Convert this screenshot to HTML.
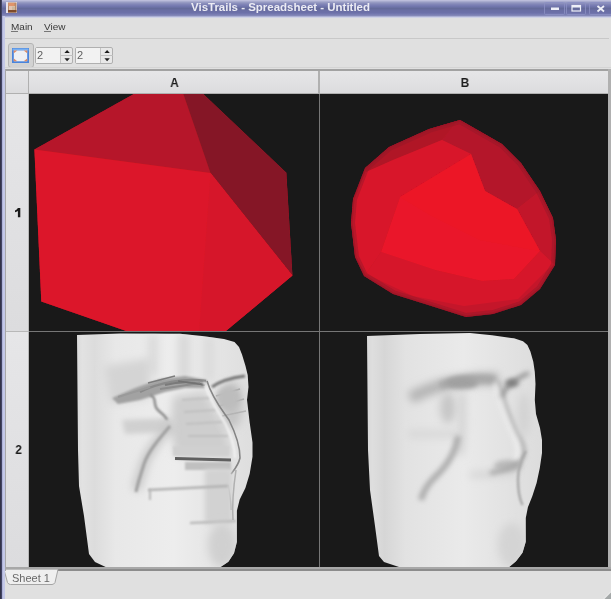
<!DOCTYPE html>
<html><head><meta charset="utf-8">
<style>
html,body{margin:0;padding:0;width:611px;height:599px;overflow:hidden;background:#e0e0e0;font-family:"Liberation Sans",sans-serif;}
.a{position:absolute;}
.tx{will-change:transform;}
#title{left:0;top:0;width:611px;height:19px;background:linear-gradient(#c4c4e0 0px,#b4b6d6 1px,#9ca0c6 2px,#8488b8 4px,#7478b0 6px,#646a9a 8.5px,#6a6ea4 10.5px,#6c70a8 12.5px,#7478b0 14px,#8488b8 15.5px,#c8cce8 17.2px,#e0e0e0 18.2px);}
#ttext{left:191px;top:1px;font-size:10.5px;font-weight:bold;color:#ececf4;white-space:nowrap;line-height:13px;transform:scaleX(1.093);transform-origin:0 0;}
#menu{left:4px;top:19px;width:607px;height:19px;background:#e0e0e0;}
.mi{font-size:9px;color:#3a3a3a;top:22px;line-height:11px;transform:scaleX(1.11);transform-origin:0 0;}
.mi u{text-decoration:none;border-bottom:1px solid #555;}
#sep1{left:4px;top:38px;width:605px;height:1px;background:#c8c8c8;}
#tbtn{left:8px;top:43px;width:24px;height:23px;border:1px solid #b4b4b4;border-radius:3px;background:#d2d2d2;}
.spin{top:47px;height:15px;border:1px solid #b0b0b0;border-radius:2px;background:#e8e8e8;}
.spin .f{position:absolute;left:0;top:0;width:24px;height:15px;background:#f2f2f2;border-right:1px solid #c4c4c4;}
.spin .t{position:absolute;left:1px;top:1px;font-size:11px;color:#606060;line-height:13px;}
.spin .up{position:absolute;left:27.5px;top:2.3px;width:0;height:0;border-left:2.6px solid transparent;border-right:2.6px solid transparent;border-bottom:2.6px solid #222;}
.spin .dn{position:absolute;left:27.5px;top:9.8px;width:0;height:0;border-left:2.6px solid transparent;border-right:2.6px solid transparent;border-top:2.6px solid #222;}
.spin .mid{position:absolute;left:25px;top:7px;width:12px;height:1px;background:#c0c0c0;}
#grid{left:5px;top:69px;width:605px;height:501px;background:#767676;}
.hdr{background:linear-gradient(#e6e6e8,#dcdcde);}
.hl{transform:scaleX(0.9);font-size:13px;font-weight:bold;color:#1a1a1a;line-height:16px;text-align:center;}
.cell{background:#191919;overflow:hidden;}
#tab{left:4px;top:569px;width:54px;height:16px;}
#tabtext{left:12px;top:571.5px;font-size:11px;color:#686868;line-height:13px;}
#root{position:absolute;left:0;top:0;width:611px;height:599px;overflow:hidden;background:#e0e0e0;filter:blur(0.6px);}
</style></head><body><div id="root">
<div class="a" id="title"></div>
<svg class="a" style="left:6px;top:2px" width="11" height="11" viewBox="0 0 11 11">
<rect width="11" height="11" fill="#e6e2ea"/>
<rect x="2" y="0.5" width="8.5" height="10" fill="#b88a68"/>
<rect x="2.5" y="1" width="6" height="3" fill="#e0946a"/>
<rect x="3" y="4" width="6" height="4" fill="#e2c4b0"/>
<rect x="6" y="4.5" width="3" height="3.5" fill="#cdb89c"/>
<rect x="2" y="8" width="8.5" height="2.5" fill="#7e4a2a"/>
</svg>
<svg class="a" style="left:543px;top:1px" width="68" height="15" viewBox="543 1 68 15">
<g fill="none" stroke="#8c90c4" stroke-width="1" opacity="0.8">
<rect x="544.5" y="2.5" width="20" height="12" rx="1"/>
<rect x="566.5" y="2.5" width="19" height="12" rx="1"/>
<rect x="589.5" y="2.5" width="23" height="12" rx="1"/>
</g>
<rect x="551" y="7.5" width="8" height="2.5" fill="#eef0f8"/>
<rect x="572" y="5.5" width="8.5" height="5.5" fill="none" stroke="#eef0f8" stroke-width="1.2"/>
<rect x="572" y="5.5" width="8.5" height="2" fill="#eef0f8"/>
<path d="M597.5 6 L604 11.5 M604 6 L597.5 11.5" stroke="#eef0f8" stroke-width="1.8"/>
</svg>
<div class="a tx" id="ttext">VisTrails - Spreadsheet - Untitled</div>
<div class="a" id="menu"></div>
<div class="a mi tx" style="left:11px">Main</div><div class="a" style="left:11px;top:31px;width:7px;height:1px;background:#777"></div>
<div class="a mi tx" style="left:43.5px">View</div><div class="a" style="left:44px;top:31px;width:7px;height:1px;background:#777"></div>
<div class="a" id="sep1"></div>

<!-- toolbar -->
<div class="a" id="tbtn"></div>
<svg class="a" style="left:12px;top:48px" width="17" height="15" viewBox="0 0 17 15">
<rect x="0" y="0" width="17" height="15" fill="#4a84dc"/>
<rect x="0.5" y="0.5" width="16" height="2" fill="#7ab0f0"/>
<rect x="1.8" y="2.5" width="13.4" height="10.8" fill="#eef0f4"/>
<path d="M1.8 2.5h3.5l-3.5 2.8z M15.2 2.5h-3.5l3.5 2.8z M1.8 13.3h3.5l-3.5-2.8z M15.2 13.3h-3.5l3.5-2.8z" fill="#e08a60"/>
</svg>
<div class="a spin" style="left:34.5px;width:36px">
 <div class="f"></div><div class="t tx">2</div><div class="mid"></div><svg style="position:absolute;left:25px;top:0" width="12" height="15" viewBox="0 0 12 15"><path d="M3.4 5 L6.1 2 L8.8 5 Z M3.4 10.2 L6.1 13.2 L8.8 10.2 Z" fill="#1e1e1e"/></svg>
</div>
<div class="a spin" style="left:74.5px;width:36px">
 <div class="f"></div><div class="t tx">2</div><div class="mid"></div><svg style="position:absolute;left:25px;top:0" width="12" height="15" viewBox="0 0 12 15"><path d="M3.4 5 L6.1 2 L8.8 5 Z M3.4 10.2 L6.1 13.2 L8.8 10.2 Z" fill="#1e1e1e"/></svg>
</div>

<!-- grid -->
<div class="a" style="left:4px;top:67px;width:607px;height:1px;background:#d4d4d4"></div>
<div class="a" id="grid"></div>
<div class="a" style="left:5px;top:69px;width:605px;height:25px;background:#b0b0b0"></div><div class="a" style="left:5px;top:69px;width:605px;height:2px;background:#a2a2a2"></div>
<div class="a hdr" style="left:6px;top:71px;width:22px;height:22px"></div>
<div class="a hdr" style="left:29px;top:71px;width:289px;height:22px"></div>
<div class="a hdr" style="left:320px;top:71px;width:288px;height:22px"></div>
<div class="a hl tx" style="left:30px;top:74.5px;width:289px">A</div>
<div class="a hl tx" style="left:320.5px;top:74.5px;width:288px">B</div>
<div class="a" style="left:5px;top:94px;width:24px;height:476px;background:#b8b8b8"></div>
<div class="a hdr" style="left:6px;top:94px;width:22px;height:237px"></div>
<div class="a hdr" style="left:6px;top:332px;width:22px;height:235px"></div>
<svg class="a" style="left:13px;top:206px" width="10" height="13" viewBox="13 206 10 13"><path d="M17.9 208 L20.3 208 L20.3 217.2 L17.9 217.2 L17.9 211 Q16.5 212 15 212.3 L15 210.4 Q17 209.8 17.9 208 Z" fill="#1a1a1a"/></svg>
<div class="a hl tx" style="left:7.5px;top:441.5px;width:21px">2</div>

<div class="a cell" id="c1" style="left:29px;top:94px;width:290px;height:237px"><svg width="290" height="237" viewBox="29 94 290 237" style="display:block">
<defs><filter id="pb" filterUnits="userSpaceOnUse" x="0" y="80" width="330" height="270"><feGaussianBlur stdDeviation="0.5"/></filter></defs>
<g filter="url(#pb)">
<polygon points="34.4,149.5 141,90 199,90 286.3,172.8 292.4,275.6 215,340 152,340 41.3,301.4" fill="#c01428"/>
<polygon points="34.4,149.5 141,90 182,90 210.5,173" fill="#b6142a"/>
<polygon points="182,90 199,90 286.3,172.8 292.4,275.6 210.5,173" fill="#851525"/>
<polygon points="34.4,149.5 210.5,173 292.4,275.6 215,340 152,340 41.3,301.4" fill="#dc1429"/>
<polygon points="210.5,173 292.4,275.6 215,340 198.5,340" fill="#d6142a"/>
</g>
</svg></div>
<div class="a cell" id="c2" style="left:320px;top:94px;width:288px;height:237px"><svg width="288" height="237" viewBox="320 94 288 237" style="display:block">
<defs><filter id="sb" filterUnits="userSpaceOnUse" x="300" y="80" width="300" height="260"><feGaussianBlur stdDeviation="0.7"/></filter>
<clipPath id="sc"><polygon points="460,120 502,144 521,163 540,191 553,218 556,240 555,265 540,289 521,305 493,314 466,317 425,304 393,294 364,276 355,257 351,223 353,199 365,168 389,147 429,129"/></clipPath></defs>
<g filter="url(#sb)">
<polygon points="460,120 502,144 521,163 540,191 553,218 556,240 555,265 540,289 521,305 493,314 466,317 425,304 393,294 364,276 355,257 351,223 353,199 365,168 389,147 429,129" fill="#c4142a"/>
<g clip-path="url(#sc)">
<polygon points="471,154 485,191 517,209 540,191 521,163 502,144 460,118 442,140" fill="#b4142a"/>
<polygon points="365,168 389,147 429,129 460,118 442,140 393,160 366,172" fill="#b01428"/>
<polygon points="366,172 393,160 442,140 471,154 400,197 381,252 366,274 355,257 351,223 353,199" fill="#d8142a"/>
<polygon points="517,209 540,191 553,218 556,240 555,265 540,251" fill="#c2142a"/>
<polygon points="381,252 435,270 482,281 514,279 540,251 555,265 547,270 518,299 464,306 413,296 366,274" fill="#d6142a"/>
<polygon points="381,252 435,270 482,281 514,279 540,251 555,265 540,289 521,305 493,314 466,317 425,304 393,294 364,276" fill="#d0142a" opacity="0.0"/>
<polygon points="471,154 400,197 381,252 435,270 482,281 514,279 540,251 517,209 485,191" fill="#ea1529"/>
<polygon points="400,197 471,154 485,191 517,209 540,251 480,240 430,215" fill="#ee1628" opacity="0.5"/>
<polygon points="460,120 502,144 521,163 540,191 553,218 556,240 555,265 540,289 521,305 493,314 466,317 425,304 393,294 364,276 355,257 351,223 353,199 365,168 389,147 429,129" fill="none" stroke="#941428" stroke-width="8" opacity="0.45"/>
<polygon points="460,120 502,144 521,163 540,191 553,218 556,240 555,265 540,289 521,305 493,314 466,317 425,304 393,294 364,276 355,257 351,223 353,199 365,168 389,147 429,129" fill="none" stroke="#941428" stroke-width="3" opacity="0.5"/>
</g>
</g>
</svg></div>
<div class="a cell" id="c3" style="left:29px;top:332px;width:290px;height:235px"><svg width="290" height="235" viewBox="29 332 290 235" style="display:block">
<defs>
<filter id="b05" filterUnits="userSpaceOnUse" x="0" y="300" width="620" height="300"><feGaussianBlur stdDeviation="0.6"/></filter>
<filter id="b1" filterUnits="userSpaceOnUse" x="0" y="300" width="620" height="300"><feGaussianBlur stdDeviation="1.2"/></filter>
<filter id="b2" filterUnits="userSpaceOnUse" x="0" y="300" width="620" height="300"><feGaussianBlur stdDeviation="2.5"/></filter>
<filter id="b4" filterUnits="userSpaceOnUse" x="0" y="300" width="620" height="300"><feGaussianBlur stdDeviation="4"/></filter>
<filter id="b6" filterUnits="userSpaceOnUse" x="0" y="300" width="620" height="300"><feGaussianBlur stdDeviation="6"/></filter>
<linearGradient id="fg1" gradientUnits="userSpaceOnUse" x1="77" x2="252" y1="0" y2="0">
<stop offset="0" stop-color="#dadada"/><stop offset="0.03" stop-color="#e2e2e2"/><stop offset="0.1" stop-color="#dcdcdc"/><stop offset="0.22" stop-color="#e8e8e8"/><stop offset="0.55" stop-color="#ededed"/><stop offset="1" stop-color="#dedede"/>
</linearGradient>
<clipPath id="cp1"><polygon points="77,335 120,333.5 180,333.8 202,336 224,339 234.5,342 239,347 242,354.5 245.5,366 247.7,375 248.5,387 247,400 249.7,422.7 252.5,442.6 252.5,456.8 249.7,473.8 245.4,488 239.7,499.4 236.9,510.7 236.9,527.7 236.9,541.9 234,553.3 228.4,561.8 219.9,567.5 215,570 112,570 95,562 89,554 84,516 79,486 78,450"/></clipPath>
</defs><polygon points="77,335 120,333.5 180,333.8 202,336 224,339 234.5,342 239,347 242,354.5 245.5,366 247.7,375 248.5,387 247,400 249.7,422.7 252.5,442.6 252.5,456.8 249.7,473.8 245.4,488 239.7,499.4 236.9,510.7 236.9,527.7 236.9,541.9 234,553.3 228.4,561.8 219.9,567.5 215,570 112,570 95,562 89,554 84,516 79,486 78,450" fill="url(#fg1)"/>
<g clip-path="url(#cp1)">
<rect x="148" y="334" width="10" height="42" fill="#dadada" filter="url(#b4)"/>
<rect x="178" y="334" width="12" height="45" fill="#d8d8d8" filter="url(#b4)"/>
<rect x="204" y="336" width="10" height="45" fill="#dadada" filter="url(#b4)"/>
<polygon points="104,366 150,358 150,398 110,404" fill="#d4d4d4" filter="url(#b4)"/>
<polygon points="173,396 205,392 224,428 232,456 176,456 170,430" fill="#cecece" filter="url(#b4)"/>
<polygon points="122,420 172,418 176,432 125,434" fill="#d0d0d0" filter="url(#b2)"/>
<ellipse cx="232" cy="405" rx="11" ry="24" fill="#c4c4c4" filter="url(#b4)"/>
<polygon points="112,398 135,388 160,379 185,376 207,380 205,388 185,388 165,392 140,400 118,404" fill="#a2a2a2" filter="url(#b1)"/>
<path d="M140 392 C160 382 185 378 206 381" stroke="#8a8a8a" stroke-width="2.5" fill="none" filter="url(#b05)"/>
<path d="M165 385 C180 381 195 382 205 385" stroke="#7a7a7a" stroke-width="2" fill="none" filter="url(#b05)"/>
<path d="M148 383 L175 376" stroke="#7c7c7c" stroke-width="1.5" fill="none" filter="url(#b05)"/>
<path d="M160 389 L200 383" stroke="#8c8c8c" stroke-width="2" fill="none" filter="url(#b05)"/>
<path d="M118 397 L150 387" stroke="#9a9a9a" stroke-width="2" fill="none" filter="url(#b05)"/>
<path d="M178 381 L205 385" stroke="#727272" stroke-width="1.5" fill="none" filter="url(#b05)"/>
<path d="M216 396 L240 389" stroke="#a4a4a4" stroke-width="1.5" fill="none" filter="url(#b05)"/>
<path d="M219 406 L244 399" stroke="#acacac" stroke-width="1.5" fill="none" filter="url(#b05)"/>
<path d="M222 416 L246 411" stroke="#b4b4b4" stroke-width="1.5" fill="none" filter="url(#b05)"/>
<path d="M182 400 L210 398 M184 412 L216 410 M186 424 L222 422 M188 436 L228 436" stroke="#c0c0c0" stroke-width="2" fill="none" filter="url(#b1)"/>
<path d="M150 395 C158 398 152 405 158 410 C162 414 166 416 167 420" stroke="#8c8c8c" stroke-width="2.5" fill="none" filter="url(#b1)"/>
<ellipse cx="228" cy="398" rx="12" ry="12" fill="#bdbdbd" filter="url(#b2)"/>
<path d="M212 387 C220 381 230 378 245 376" stroke="#767676" stroke-width="3" fill="none" filter="url(#b1)"/>
<path d="M207 381 C212 398 222 410 229 420 C235 432 240 445 240 458 C238 466 234 470 231 474" stroke="#848484" stroke-width="1.6" fill="none" filter="url(#b05)"/>
<path d="M204 382 C209 398 218 412 225 423 C231 435 235 447 235 458" stroke="#f4f4f4" stroke-width="2" fill="none" filter="url(#b1)"/>
<path d="M228 485 C230 495 231 505 231 510" stroke="#9c9c9c" stroke-width="1.5" fill="none" filter="url(#b05)"/>
<rect x="173" y="446" width="56" height="10" fill="#d0d0d0" filter="url(#b1)"/>
<rect x="185" y="462" width="46" height="8" fill="#c0c0c0" filter="url(#b1)"/>
<rect x="205" y="469" width="27" height="55" fill="#d2d2d2" filter="url(#b2)"/>
<path d="M175 458.5 L231 460" stroke="#5e5e5e" stroke-width="3" fill="none" filter="url(#b05)"/>
<path d="M170 426 C158 440 148 452 144 464 C141 474 138 482 136 490" stroke="#c6c6c6" stroke-width="9" fill="none" filter="url(#b4)"/>
<path d="M170 426 C158 440 148 452 144 464 C141 474 138 482 136 492" stroke="#a0a0a0" stroke-width="3" fill="none" filter="url(#b1)"/>
<path d="M148 490 L228 486" stroke="#b2b2b2" stroke-width="2.5" fill="none" filter="url(#b1)"/>
<path d="M150 489 L150 500" stroke="#b8b8b8" stroke-width="2" fill="none" filter="url(#b1)"/>
<path d="M190 523 L236 521" stroke="#bcbcbc" stroke-width="2.5" fill="none" filter="url(#b1)"/>
<ellipse cx="222" cy="545" rx="14" ry="22" fill="#d0d0d0" filter="url(#b4)"/>
<path d="M236 470 C233 490 232 505 233 520" stroke="#b0b0b0" stroke-width="1.5" fill="none" filter="url(#b05)"/>
</g>
</svg></div>
<div class="a cell" id="c4" style="left:320px;top:332px;width:288px;height:235px"><svg width="288" height="235" viewBox="320 332 288 235" style="display:block">
<defs>
<linearGradient id="fg2" gradientUnits="userSpaceOnUse" x1="367" x2="542" y1="0" y2="0">
<stop offset="0" stop-color="#d8d8d8"/><stop offset="0.03" stop-color="#dedede"/><stop offset="0.1" stop-color="#d6d6d6"/><stop offset="0.22" stop-color="#e2e2e2"/><stop offset="0.55" stop-color="#eaeaea"/><stop offset="1" stop-color="#dcdcdc"/>
</linearGradient>
<clipPath id="cp2"><polygon points="367,336 420,334 470,333.1 492,335.3 514,338.3 523,341.2 527.4,344.9 530.4,351.5 533.3,361.8 534.8,372.1 535.5,384 534.8,400 536,414 540,428 542,440 542,453 539.8,468 536.6,483 532.3,496.3 527.9,507.2 525.8,518 525.8,531 525.8,541.8 522.5,552.7 516,561.3 509.5,566.8 505,570 408,570 384,562 379,556 375,526 370,490 368,450"/></clipPath>
</defs><polygon points="367,336 420,334 470,333.1 492,335.3 514,338.3 523,341.2 527.4,344.9 530.4,351.5 533.3,361.8 534.8,372.1 535.5,384 534.8,400 536,414 540,428 542,440 542,453 539.8,468 536.6,483 532.3,496.3 527.9,507.2 525.8,518 525.8,531 525.8,541.8 522.5,552.7 516,561.3 509.5,566.8 505,570 408,570 384,562 379,556 375,526 370,490 368,450" fill="url(#fg2)"/>
<g clip-path="url(#cp2)">
<path d="M410 398 C430 388 455 378 498 379" stroke="#b4b4b4" stroke-width="12" fill="none" filter="url(#b4)"/>
<path d="M440 386 C455 380 475 377 495 380" stroke="#a8a8a8" stroke-width="8" fill="none" filter="url(#b2)"/>
<ellipse cx="462" cy="383" rx="16" ry="6" fill="#a0a0a0" filter="url(#b2)"/>
<ellipse cx="448" cy="408" rx="8" ry="16" fill="#c6c6c6" filter="url(#b4)"/>
<path d="M501 398 C504 388 512 380 529 373" stroke="#8c8c8c" stroke-width="4" fill="none" filter="url(#b2)"/>
<ellipse cx="512" cy="383" rx="7" ry="4" fill="#7c7c7c" filter="url(#b2)"/>
<path d="M462 392 C463 410 462 435 460 455" stroke="#cccccc" stroke-width="6" fill="none" filter="url(#b4)"/>
<ellipse cx="508" cy="466" rx="14" ry="6" fill="#b8b8b8" filter="url(#b2)"/>
<path d="M470 475 C485 474 500 474 515 472" stroke="#cfcfcf" stroke-width="5" fill="none" filter="url(#b4)"/>
<path d="M498 381 C502 398 508 414 516 431 C523 442 527 452 521 461" stroke="#999999" stroke-width="3" fill="none" filter="url(#b2)"/>
<path d="M495 383 C499 400 505 416 512 432 C518 444 520 452 516 460" stroke="#f6f6f6" stroke-width="3" fill="none" filter="url(#b2)"/>
<ellipse cx="524" cy="415" rx="6" ry="22" fill="#d2d2d2" filter="url(#b4)"/>
<path d="M408 434 L458 434" stroke="#d6d6d6" stroke-width="7" fill="none" filter="url(#b4)"/>
<path d="M458 436 C456 452 447 466 434 478 C427 485 423 492 421 500" stroke="#ababab" stroke-width="6" fill="none" filter="url(#b2)"/>
<path d="M490 473 C505 471 515 466 521 461" stroke="#a4a4a4" stroke-width="4" fill="none" filter="url(#b2)"/>
<path d="M525.8 451 C520 462 518 472 518 479 C518 488 519 498 522.5 505" stroke="#a8a8a8" stroke-width="2.5" fill="none" filter="url(#b1)"/>
<ellipse cx="512" cy="545" rx="14" ry="22" fill="#d4d4d4" filter="url(#b4)"/>
</g>
</svg></div>

<div class="a" style="left:608px;top:69px;width:3px;height:502px;background:#b0b0b0"></div>
<div class="a" style="left:5px;top:567px;width:606px;height:2px;background:#a8a8a8"></div>
<div class="a" style="left:5px;top:569px;width:606px;height:2px;background:#8c8c8c"></div>
<div class="a" style="left:6px;top:571px;width:605px;height:28px;background:#e0e0e0"></div>
<svg class="a" style="left:599px;top:587px" width="12" height="12" viewBox="0 0 12 12"><path d="M12 5.5 L5.5 12 L12 12 Z" fill="#a4a8a8"/><path d="M12 4.5 L4.5 12" stroke="#ececec" stroke-width="0.8"/></svg>
<svg class="a" style="left:3px;top:569px" width="58" height="18" viewBox="0 0 58 18">
<path d="M1 0.5 L4.5 13.5 Q5.5 15.5 7.5 15.5 L49 15.5 Q51 15.5 52 13.5 L55 0.5" fill="#efefef" stroke="#a4a4a4" stroke-width="1"/>
</svg>
<div class="a tx" id="tabtext">Sheet 1</div>
<div class="a" style="left:0;top:0;width:2px;height:599px;background:linear-gradient(90deg,#2a2a3c,#4a4c70)"></div>
<div class="a" style="left:2px;top:16px;width:3px;height:583px;background:linear-gradient(90deg,#9a9ec8 0,#c4c8e8 1px,#c4c8e8 3px)"></div>
<div class="a" style="left:5px;top:69px;width:1px;height:502px;background:#a8a8a8"></div>
</div></body></html>
